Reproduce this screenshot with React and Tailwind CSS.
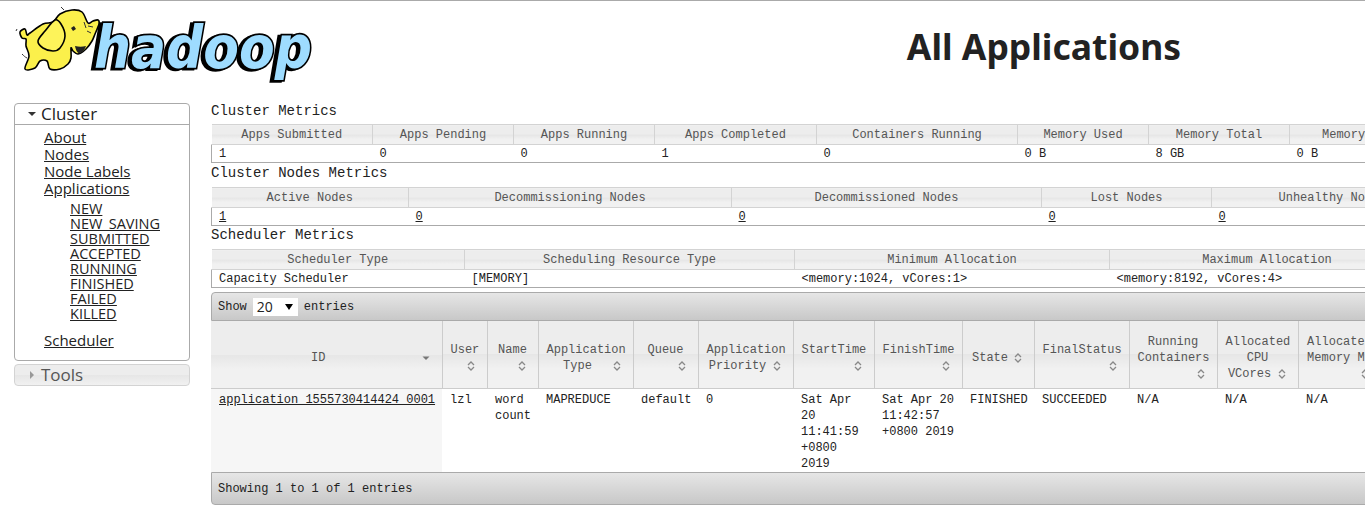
const mono = { fontFamily: '"Liberation Mono", monospace' };

const thBg = 'bg-[linear-gradient(#ededed_0%,#ededed_50%,#e6e6e6_50%,#f1f1f1_72%,#f1f1f1_100%)]';

// smooth closed outline through points, for the elephant
function smooth(points) {
  const n = points.length;
  let d = `M${points[0][0]} ${points[0][1]}`;
  for (let i = 0; i < n; i++) {
    const [p0, p1, p2, p3] = [points[(i - 1 + n) % n], points[i], points[(i + 1) % n], points[(i + 2) % n]];
    const c1 = [p1[0] + (p2[0] - p0[0]) / 6, p1[1] + (p2[1] - p0[1]) / 6];
    const c2 = [p2[0] - (p3[0] - p1[0]) / 6, p2[1] - (p3[1] - p1[1]) / 6];
    d += `C${c1[0].toFixed(1)} ${c1[1].toFixed(1)} ${c2[0].toFixed(1)} ${c2[1].toFixed(1)} ${p2[0]} ${p2[1]}`;
  }
  return d + 'Z';
}

const bodyPoints = [
  [20, 31], [25, 28], [27, 34], [30, 32], [43, 23], [53, 21], [60, 13], [72, 9], [82, 11], [88, 22], [93, 20], [98, 19],
  [99, 23], [95, 33], [92, 40], [86, 48], [78, 53], [73, 50], [71, 47], [71, 57], [68, 63], [60, 68], [50, 68], [47, 60],
  [40, 60], [35, 67], [25, 68], [29, 55], [26, 45], [26, 38], [22, 37],
];
const earPoints = [[55, 19], [45, 30], [38, 40], [43, 47], [53, 50], [60, 47], [65, 35], [61, 23]];

function HadoopLogo() {
  return (
    <svg width="330" height="100" viewBox="0 0 330 100" className="block">
      <text
        x="94"
        y="67"
        fontFamily="DejaVu Sans, sans-serif"
        fontWeight="700"
        fontStyle="italic"
        fontSize="58"
        textLength="218"
        lengthAdjust="spacingAndGlyphs"
        fill="#9edcff"
        stroke="#000"
        strokeWidth="3.5"
        paintOrder="stroke"
        className="drop-shadow-[-3px_1px_0_#000]"
      >
        hadoop
      </text>
      <path d={smooth(bodyPoints)} fill="#fbf04b" stroke="#000" strokeWidth="1.6" strokeLinejoin="round" />
      <path d={smooth(earPoints)} fill="#fdf35a" stroke="#000" strokeWidth="1.6" />
      <path d="M71 27l3-2 2 3-3 2zM75 45c1 5 3 8 5 7 3-1 5-4 6-7-4 1-7 1-11 0z" fill="#222" />
      <path d="M84 21l2 6M88 25l5 1M87 30l4 2M22 53c2 2 3 3 5 4M64 9l-3-3M16 30l1-2" fill="none" stroke="#333" strokeWidth="1" />
    </svg>
  );
}

function SortIcon({ active }) {
  return (
    <span className="float-right block h-4 w-4">
      <svg width="16" height="16" viewBox="0 0 16 16" className="block">
        {active ? (
          <path d="M4.5 6.5h7L8 10z" fill="#777" />
        ) : (
          <path d="M5 7l3-3 3 3M5 9l3 3 3-3" fill="none" stroke="#888" strokeWidth="1.3" />
        )}
      </svg>
    </span>
  );
}

function MetricTable({ columns, values, width }) {
  return (
    <table className={`table-fixed border-collapse text-[12px] leading-[16px] ${width}`}>
      <thead>
        <tr>
          {columns.map((col) => (
            <th key={col.title} className={`h-[20px] border-y border-r border-[#d3d3d3] p-0 pt-px text-center font-normal text-[#555] ${thBg} ${col.w}`}>
              {col.title}
            </th>
          ))}
        </tr>
      </thead>
      <tbody>
        <tr>
          {values.map((value, i) => (
            <td key={i} className={`h-[18px] border-b border-[#aaa] p-0 pt-px pl-[7px] text-[#222] ${i === 0 ? 'border-l' : ''}`}>
              {value}
            </td>
          ))}
        </tr>
      </tbody>
    </table>
  );
}

const clusterColumns = [
  { title: 'Apps Submitted', w: 'w-[161px]' },
  { title: 'Apps Pending', w: 'w-[141px]' },
  { title: 'Apps Running', w: 'w-[141px]' },
  { title: 'Apps Completed', w: 'w-[162px]' },
  { title: 'Containers Running', w: 'w-[201px]' },
  { title: 'Memory Used', w: 'w-[131px]' },
  { title: 'Memory Total', w: 'w-[141px]' },
  { title: 'Memory Reserved', w: 'w-[173px]' },
];

const nodeColumns = [
  { title: 'Active Nodes', w: 'w-[197px]' },
  { title: 'Decommissioning Nodes', w: 'w-[323px]' },
  { title: 'Decommissioned Nodes', w: 'w-[310px]' },
  { title: 'Lost Nodes', w: 'w-[170px]' },
  { title: 'Unhealthy Nodes', w: 'w-[242px]' },
];

const schedulerColumns = [
  { title: 'Scheduler Type', w: 'w-[253px]' },
  { title: 'Scheduling Resource Type', w: 'w-[330px]' },
  { title: 'Minimum Allocation', w: 'w-[315px]' },
  { title: 'Maximum Allocation', w: 'w-[315px]' },
];

const link = (text) => <a className="underline">{text}</a>;

const appColumns = [
  { title: 'ID', w: 'w-[231px]', active: true, value: link('application_1555730414424_0001'), cell: 'bg-[#f6f6f6]' },
  { title: 'User', w: 'w-[45px]', value: 'lzl' },
  { title: 'Name', w: 'w-[51px]', value: 'word count' },
  { title: 'Application Type', w: 'w-[95px]', value: 'MAPREDUCE' },
  { title: 'Queue', w: 'w-[65px]', value: 'default' },
  { title: 'Application Priority', w: 'w-[95px]', value: '0' },
  { title: 'StartTime', w: 'w-[81px]', value: 'Sat Apr 20 11:41:59 +0800 2019' },
  { title: 'FinishTime', w: 'w-[88px]', value: 'Sat Apr 20 11:42:57 +0800 2019' },
  { title: 'State', w: 'w-[72px]', value: 'FINISHED' },
  { title: 'FinalStatus', w: 'w-[95px]', value: 'SUCCEEDED' },
  { title: 'Running Containers', w: 'w-[88px]', value: 'N/A' },
  { title: 'Allocated CPU VCores', w: 'w-[81px]', value: 'N/A' },
  { title: 'Allocated Memory\u00a0MB', w: 'w-[83px]', value: 'N/A' },
];

function Sidebar() {
  const states = ['NEW', 'NEW_SAVING', 'SUBMITTED', 'ACCEPTED', 'RUNNING', 'FINISHED', 'FAILED', 'KILLED'];
  return (
    <aside className="mt-[2px] ml-[14px] w-[176px] shrink-0 text-[#222]" style={{ fontFamily: '"Open Sans", "Noto Sans", sans-serif' }}>
      <div className="h-[258px] rounded border border-[#aaa] bg-white">
        <div className="flex h-[21px] items-center border-b border-[#aaa] pl-[13px] text-[17px] leading-[20px]">
          <svg width="8" height="8" viewBox="0 0 8 8" className="mr-[5px]"><path d="M0 2h8L4 6z" fill="#333" /></svg>
          Cluster
        </div>
        <ul className="pt-[4px] pl-[29px] text-[15px] leading-[17px]">
          <li>{link('About')}</li>
          <li>{link('Nodes')}</li>
          <li>{link('Node Labels')}</li>
          <li>{link('Applications')}</li>
          <ul className="pt-[4px] pb-[5px] pl-[26px] text-[14.5px] leading-[15px]">
            {states.map((state) => (
              <li key={state}>{link(state)}</li>
            ))}
          </ul>
          <li className="pt-[6px]">{link('Scheduler')}</li>
        </ul>
      </div>
      <div className="mt-[3px] flex h-[22px] items-center rounded border border-[#d3d3d3] bg-[linear-gradient(#ededed_0%,#ededed_50%,#e6e6e6_50%,#f1f1f1_100%)] pb-px pl-[13px] text-[17px] text-[#555]">
        <svg width="8" height="8" viewBox="0 0 8 8" className="mr-[5px]"><path d="M2 0v8l4-4z" fill="#999" /></svg>
        Tools
      </div>
    </aside>
  );
}

function AppsTable() {
  return (
    <div className="w-[1300px]">
      <div className="flex h-[29px] items-center gap-[6px] rounded-tl border border-[#aaa] bg-[linear-gradient(#e6e6e6,#c8c8c8)] pl-[6px] text-[12px] text-[#222]">
        <span>Show</span>
        <span className="flex h-[18px] w-[45px] items-center justify-between bg-white pr-[5px] pl-[4px] text-[14px]" style={{ fontFamily: '"Open Sans", sans-serif' }}>
          20
          <svg width="8" height="8" viewBox="0 0 8 8"><path d="M0 1h8L4 7z" fill="#000" /></svg>
        </span>
        <span>entries</span>
      </div>
      <table className="w-[1170px] table-fixed border-collapse text-[12px] leading-[16px]">
        <thead>
          <tr>
            {appColumns.map((col) => (
              <th key={col.title} className={`h-[67px] border-r border-b border-[#ccc] px-2 pt-[8px] pb-0 align-middle font-normal text-[#555] ${thBg} ${col.w}`}>
                <div className="flow-root text-center">
                  {col.title}
                  <SortIcon active={col.active} />
                </div>
              </th>
            ))}
          </tr>
        </thead>
        <tbody>
          <tr>
            {appColumns.map((col) => (
              <td key={col.title} className={`h-[83px] px-2 pt-[3px] align-top text-[#222] ${col.cell || ''}`}>
                {col.value}
              </td>
            ))}
          </tr>
        </tbody>
      </table>
      <div className="flex h-[33px] items-center rounded-bl border border-[#aaa] bg-[linear-gradient(#e6e6e6,#c8c8c8)] pt-px pl-[6px] text-[12px] text-[#222]">
        Showing 1 to 1 of 1 entries
      </div>
    </div>
  );
}

export default function App() {
  return (
    <div className="h-[523px] w-[1365px] overflow-hidden border-t border-[#aaa] bg-white">
      <header className="flex h-[100px]">
        <HadoopLogo />
        <h1 className="ml-[393px] w-[642px] pt-[25px] text-center text-[35.5px] leading-[40px] font-bold text-[#222]" style={{ fontFamily: '"Noto Sans", sans-serif' }}>
          All Applications
        </h1>
      </header>
      <div className="flex">
        <Sidebar />
        <main className="ml-[21px] min-w-0 flex-1" style={mono}>
          <h3 className="h-[23px] text-[14px] leading-[21px] text-[#222]">Cluster Metrics</h3>
          <MetricTable columns={clusterColumns} values={['1', '0', '0', '1', '0', '0 B', '8 GB', '0 B']} width="w-[1251px]" />
          <h3 className="h-[24px] text-[14px] leading-[21px] text-[#222]">Cluster Nodes Metrics</h3>
          <MetricTable columns={nodeColumns} values={[link('1'), link('0'), link('0'), link('0'), link('0')]} width="w-[1242px]" />
          <h3 className="h-[23px] text-[14px] leading-[19px] text-[#222]">Scheduler Metrics</h3>
          <MetricTable columns={schedulerColumns} values={['Capacity Scheduler', '[MEMORY]', '<memory:1024, vCores:1>', '<memory:8192, vCores:4>']} width="w-[1213px]" />
          <div className="h-[4px]" />
          <AppsTable />
        </main>
      </div>
    </div>
  );
}
